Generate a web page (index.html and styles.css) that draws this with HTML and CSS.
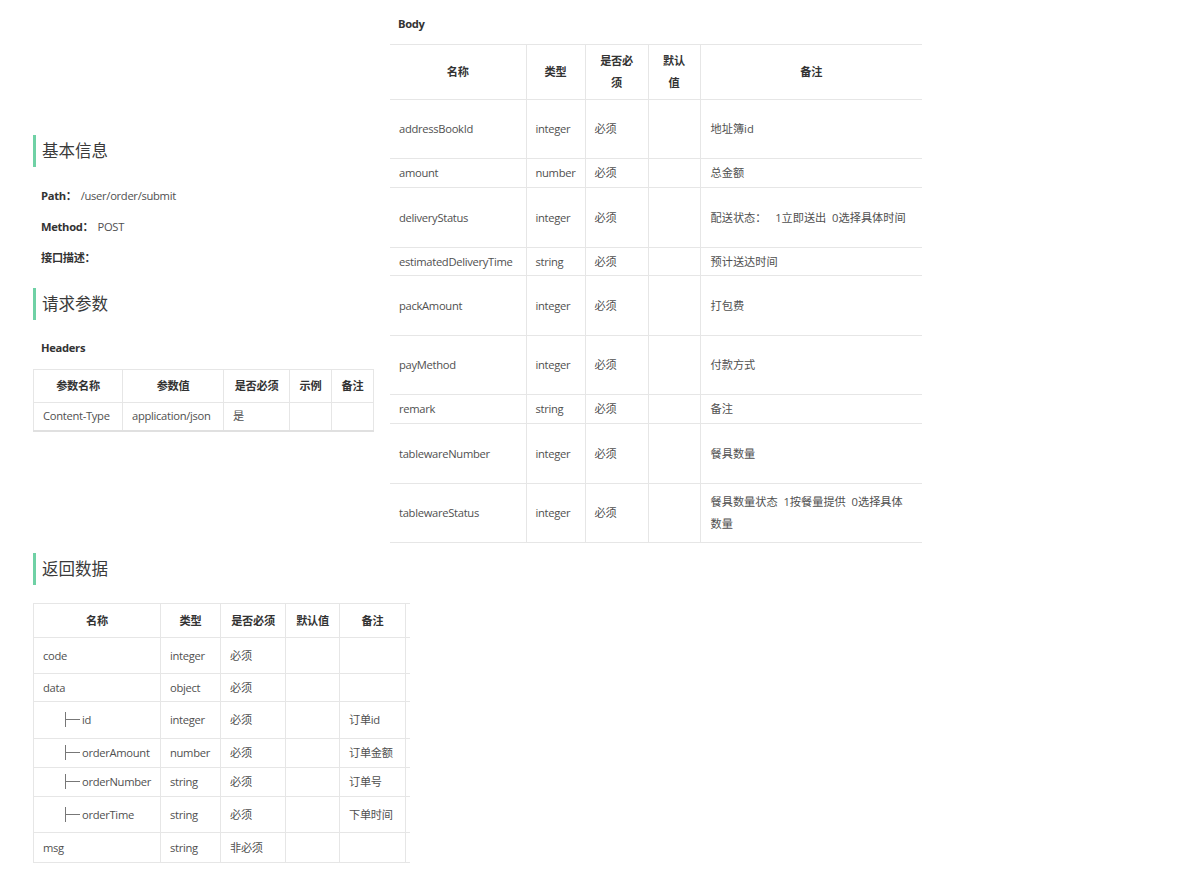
FILE: index.html
```html
<!DOCTYPE html>
<html lang="zh-CN">
<head>
<meta charset="utf-8">
<title>提交订单</title>
<link rel="stylesheet" href="styles.css">
</head>
<body>
<div class="top">
  <div class="left">
    <h2 class="sec">基本信息</h2>
    <p class="kv first"><b>Path：</b><span class="val">/user/order/submit</span></p>
    <p class="kv"><b>Method：</b><span class="val">POST</span></p>
    <p class="kv"><b>接口描述：</b></p>
    <h2 class="sec sec2">请求参数</h2>
    <p class="sub">Headers</p>
    <table class="tbl htbl">
      <colgroup><col class="c89"><col class="c101"><col class="c66"><col class="c42"><col class="c42"></colgroup>
      <thead><tr><th>参数名称</th><th>参数值</th><th>是否必须</th><th>示例</th><th>备注</th></tr></thead>
      <tbody><tr><td>Content-Type</td><td>application/json</td><td>是</td><td></td><td></td></tr></tbody>
    </table>
  </div>
  <div class="right">
    <p class="sub body-title">Body</p>
    <table class="tbl btbl">
      <colgroup><col class="c136"><col class="c59"><col class="c63"><col class="c52"><col class="c222"></colgroup>
      <thead><tr><th>名称</th><th>类型</th><th class="narrow">是否必须</th><th class="narrow">默认值</th><th>备注</th></tr></thead>
      <tbody>
        <tr class="h59"><td>addressBookId</td><td>integer</td><td>必须</td><td></td><td>地址簿id</td></tr>
        <tr class="h29"><td>amount</td><td>number</td><td>必须</td><td></td><td>总金额</td></tr>
        <tr class="h60"><td>deliveryStatus</td><td>integer</td><td>必须</td><td></td><td>配送状态：&nbsp;&nbsp; 1立即送出&nbsp; 0选择具体时间</td></tr>
        <tr class="h28"><td>estimatedDeliveryTime</td><td>string</td><td>必须</td><td></td><td>预计送达时间</td></tr>
        <tr class="h60"><td>packAmount</td><td>integer</td><td>必须</td><td></td><td>打包费</td></tr>
        <tr class="h59"><td>payMethod</td><td>integer</td><td>必须</td><td></td><td>付款方式</td></tr>
        <tr class="h29"><td>remark</td><td>string</td><td>必须</td><td></td><td>备注</td></tr>
        <tr class="h60"><td>tablewareNumber</td><td>integer</td><td>必须</td><td></td><td>餐具数量</td></tr>
        <tr class="h59"><td>tablewareStatus</td><td>integer</td><td>必须</td><td></td><td>餐具数量状态&nbsp; 1按餐量提供&nbsp; 0选择具体数量</td></tr>
      </tbody>
    </table>
  </div>
</div>
<div class="bottom">
  <h2 class="sec">返回数据</h2>
  <div class="clip">
    <table class="tbl rtbl">
      <colgroup><col class="c127"><col class="c60"><col class="c65"><col class="c54"><col class="c66"><col class="c100"></colgroup>
      <thead><tr class="r34"><th>名称</th><th>类型</th><th>是否必须</th><th>默认值</th><th>备注</th><th></th></tr></thead>
      <tbody>
        <tr class="r36"><td>code</td><td>integer</td><td>必须</td><td></td><td></td><td></td></tr>
        <tr class="r28"><td>data</td><td>object</td><td>必须</td><td></td><td></td><td></td></tr>
        <tr class="r37"><td class="child"><span class="tree"></span>id</td><td>integer</td><td>必须</td><td></td><td>订单id</td><td></td></tr>
        <tr class="r29"><td class="child"><span class="tree"></span>orderAmount</td><td>number</td><td>必须</td><td></td><td>订单金额</td><td></td></tr>
        <tr class="r29"><td class="child"><span class="tree"></span>orderNumber</td><td>string</td><td>必须</td><td></td><td>订单号</td><td></td></tr>
        <tr class="r36"><td class="child"><span class="tree"></span>orderTime</td><td>string</td><td>必须</td><td></td><td>下单时间</td><td></td></tr>
        <tr class="r30"><td>msg</td><td>string</td><td>非必须</td><td></td><td></td><td></td></tr>
      </tbody>
    </table>
  </div>
</div>
</body>
</html>
```

FILE: styles.css
```css
* { box-sizing: border-box; }
html, body { margin: 0; padding: 0; background: #fff; }
body {
  font-family: "Open Sans", "Noto Sans CJK SC", sans-serif;
  font-size: 11.2px;
  letter-spacing: -0.3px;
  color: #505050;
  line-height: 22px;
}
.top { display: flex; align-items: flex-start; height: 553px; }
.left { width: 357px; margin-left: 33px; padding-top: 135px; }
.right { width: 532px; padding-top: 13px; }

.sec {
  margin: 0;
  height: 32px;
  line-height: 32px;
  border-left: 3px solid #6fd1a5;
  padding-left: 6px;
  font-size: 16.5px;
  font-weight: normal;
  color: #3a3a3a;
  letter-spacing: 0;
}
.sec2 { margin-top: 19px; }
.kv { margin: 9px 0 0 8px; height: 22px; }
.kv.first { margin-top: 18px; }
.kv b { color: #333; font-weight: bold; }
.kv .val { margin-left: 4px; }
.sub { margin: 17px 0 0 8px; height: 22px; font-weight: bold; color: #333; }
.body-title { margin-top: 0; }

.tbl { border-collapse: collapse; table-layout: fixed; }
.tbl th, .tbl td { border: 1px solid #e6e6e6; padding: 0 9px; text-align: left; vertical-align: middle; }
.tbl th { text-align: center; font-weight: bold; color: #333; }

.htbl { width: 340px; margin-top: 10px; border-bottom: 2px solid #e0e0e0; }
.htbl th { height: 33px; }
.htbl td { height: 28px; }

.btbl { width: 532px; margin-top: 9px; }
.btbl tr > :first-child { border-left: none; }
.btbl tr > :last-child { border-right: none; }
.btbl th { height: 55px; padding: 0 8px; }
.btbl th.narrow { padding: 0 10px; }
.btbl td { padding: 0 9px; }
.btbl td:last-child { padding: 0 13px 0 10px; letter-spacing: 0; }
.h59 td { height: 59px; }
.h60 td { height: 60px; }
.h29 td { height: 29px; }
.h28 td { height: 28px; }

.bottom { margin-left: 33px; }
.clip { width: 377px; overflow: hidden; margin-top: 18px; }
.rtbl { width: 472px; }
.rtbl th, .rtbl td { white-space: nowrap; }
.rtbl td { padding: 0 9px; }
.r34 th { height: 34px; }
.r36 td { height: 36px; }
.r28 td { height: 28px; }
.r37 td { height: 37px; }
.r29 td { height: 29px; }
.r30 td { height: 30px; }
.rtbl td.child { padding: 0 0 0 31px; }
.tree {
  display: inline-block;
  width: 15px;
  height: 15px;
  vertical-align: -3px;
  margin-right: 2px;
  border-left: 1px solid #777;
  background: linear-gradient(#777, #777) no-repeat left center / 100% 1px;
}

col.c89 { width: 89px; } col.c101 { width: 101px; } col.c66 { width: 66px; } col.c42 { width: 42px; }
col.c136 { width: 136px; } col.c59 { width: 59px; } col.c63 { width: 63px; } col.c52 { width: 52px; } col.c222 { width: 222px; }
col.c127 { width: 127px; } col.c60 { width: 60px; } col.c65 { width: 65px; } col.c54 { width: 54px; } col.c100 { width: 100px; }
```
